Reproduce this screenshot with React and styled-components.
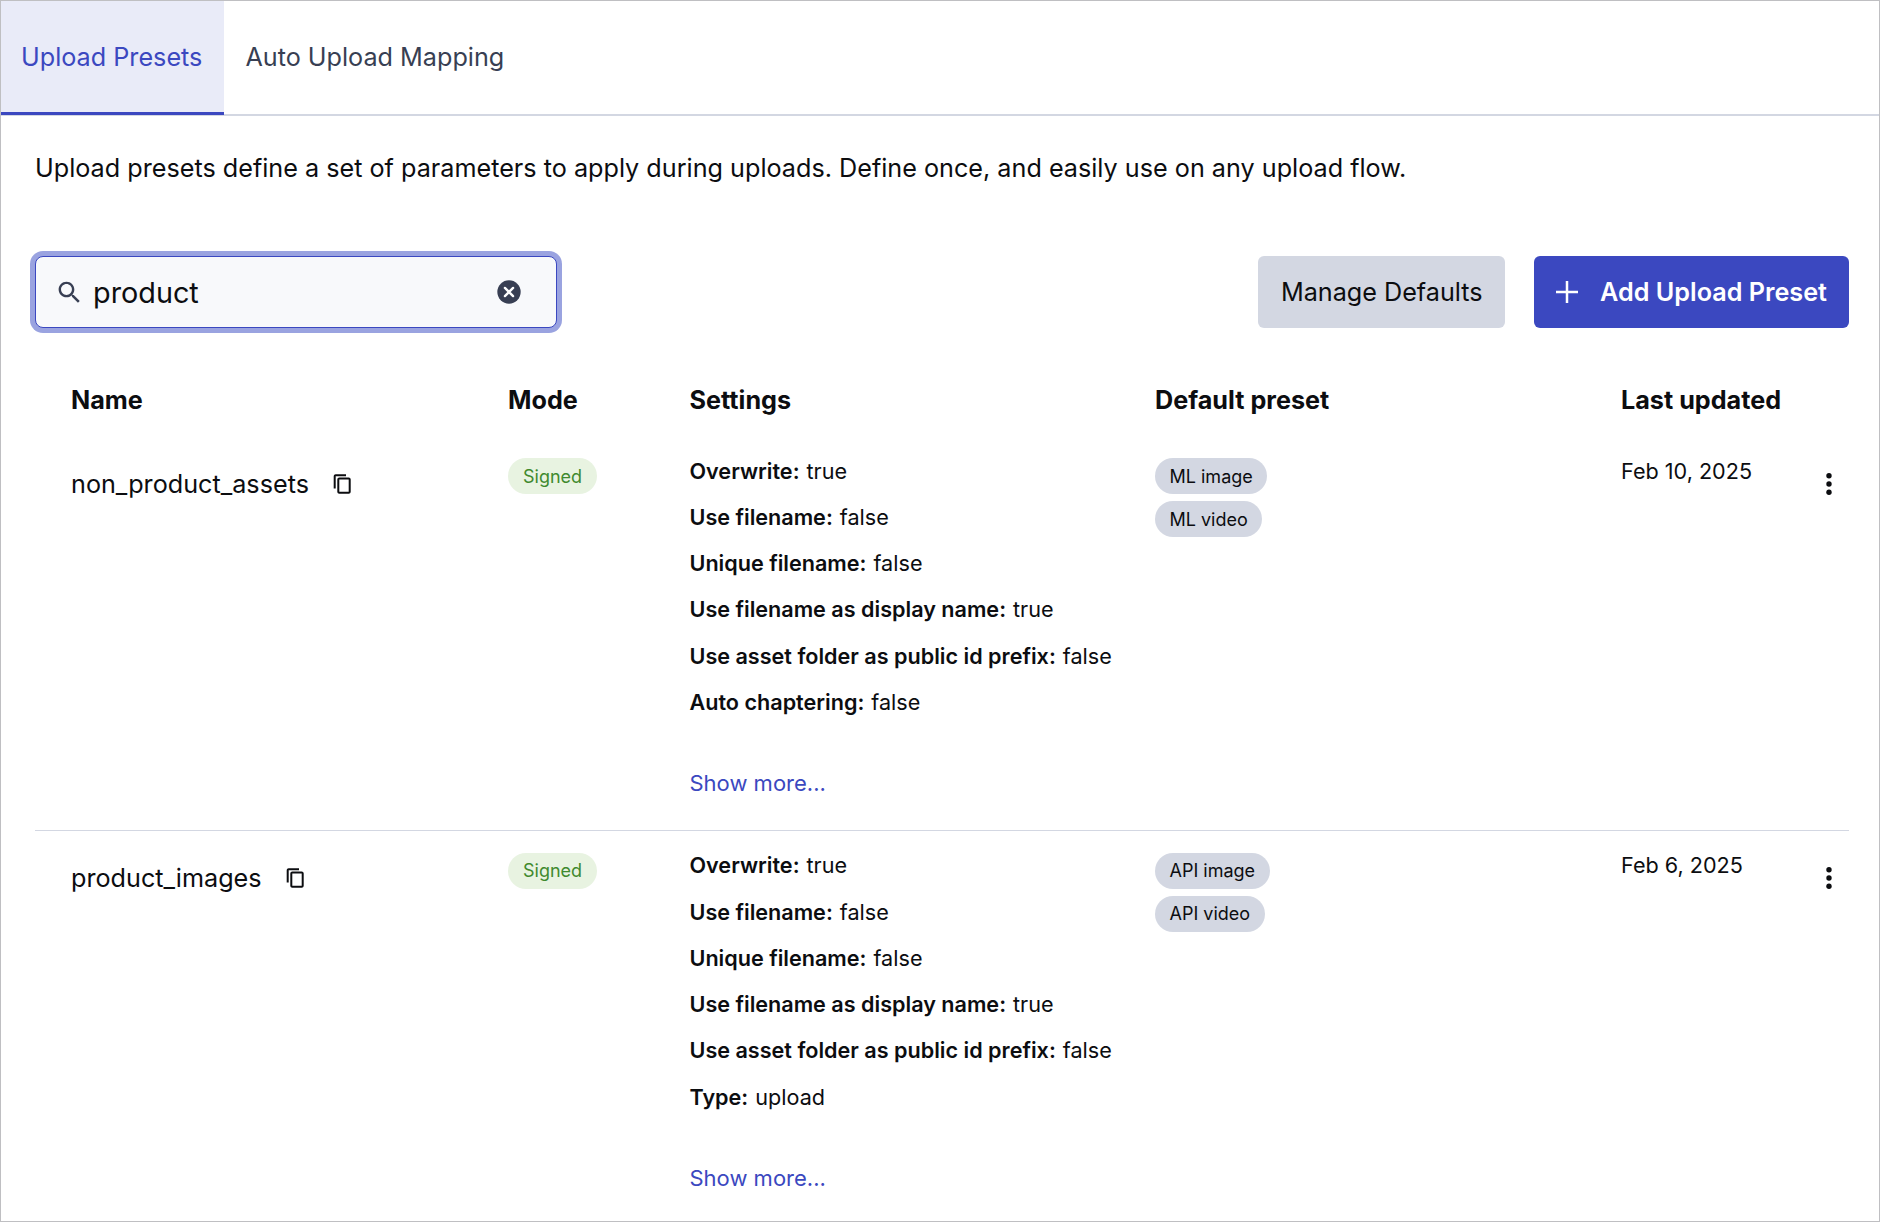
import React from 'react'
import styled, { createGlobalStyle } from 'styled-components'

const GlobalStyle = createGlobalStyle`
  html, body {
    margin: 0;
    padding: 0;
    background: #fff;
  }
  * {
    box-sizing: border-box;
  }
`

const Page = styled.div`
  width: 1880px;
  height: 1222px;
  border: 1px solid #bfbfc2;
  overflow: hidden;
  font-family: Inter, 'Liberation Sans', sans-serif;
  color: #0c0d10;
  background: #fff;
`

const TabBar = styled.div`
  display: flex;
  height: 115px;
  border-bottom: 2px solid #d3d7e2;
`

const Tab = styled.div`
  display: flex;
  align-items: center;
  height: 114px;
  padding: 0 22px 0 ${props => (props.active ? '20px' : '21px')};
  font-size: 25.2px;
  color: ${props => (props.active ? '#3b48c0' : '#383f53')};
  background: ${props => (props.active ? '#e9ebf8' : 'transparent')};
  border-bottom: 3px solid ${props => (props.active ? '#3b48c0' : 'transparent')};
`

const Intro = styled.p`
  margin: 0;
  padding: 35px 0 0 34px;
  font-size: 25.2px;
  line-height: 34px;
`

const Toolbar = styled.div`
  display: flex;
  align-items: center;
  gap: 29px;
  margin-top: 71px;
  padding: 0 30px 0 34px;
`

const SearchBox = styled.div`
  display: flex;
  align-items: center;
  width: 522px;
  height: 72px;
  margin-right: auto;
  padding: 0 33px 0 19px;
  background: #f8f9fb;
  border: 1.5px solid #3b48c0;
  border-radius: 8px;
  box-shadow: 0 0 0 5px #9aa3e0;
`

const SearchText = styled.span`
  flex: 1;
  margin-left: 9px;
  padding-top: 1px;
  font-size: 28.8px;
`

const Button = styled.div`
  display: flex;
  align-items: center;
  gap: ${props => (props.primary ? '21px' : '0')};
  height: 72px;
  padding: ${props => (props.primary ? '0 22px 0 21px' : '0 22.5px')};
  font-size: 25.2px;
  font-weight: ${props => (props.primary ? 600 : 400)};
  color: ${props => (props.primary ? '#fff' : '#0c0d10')};
  background: ${props => (props.primary ? '#3b48c0' : '#d3d7e2')};
  border-radius: 6px;
`

const Table = styled.div`
  margin: 0 30px 0 34px;
`

const columns = '437px 181.5px 465.5px 466px 1fr'

const HeaderRow = styled.div`
  display: grid;
  grid-template-columns: ${columns};
  align-items: center;
  height: 108px;
  padding: 36px 0 0 36px;
  font-size: 25.2px;
  font-weight: 700;
`

const Row = styled.div`
  display: grid;
  grid-template-columns: ${columns};
  align-items: start;
  padding: 11.5px 0 24px 36px;
  border-bottom: 1px solid #d3d7e2;
`

const NameCell = styled.div`
  display: flex;
  align-items: center;
  gap: 21px;
  padding-top: 18px;
  font-size: 25.2px;
  line-height: 36px;
`

const Pill = styled.span`
  display: inline-flex;
  align-items: center;
  height: 36px;
  padding: 0 ${props => (props.signed ? '15px' : '14.5px')};
  border-radius: 18px;
  font-size: 18px;
  color: ${props => (props.signed ? '#3f8a2e' : '#0c0d10')};
  background: ${props => (props.signed ? '#e8f3e1' : '#d3d7e2')};
`

const ModeCell = styled.div`
  padding-top: 10.5px;
`

const SettingLine = styled.div`
  font-size: 21.6px;
  line-height: 46.3px;
  white-space: nowrap;
`

const SettingName = styled.strong`
  font-weight: 600;
  margin-right: 7px;
`

const ShowMore = styled.div`
  margin-top: 34.5px;
  font-size: 22px;
  line-height: 46px;
  color: #3b48c0;
`

const TagStack = styled.div`
  display: flex;
  flex-direction: column;
  align-items: flex-start;
  gap: 7px;
  padding-top: 10.5px;
`

const DateCell = styled.div`
  display: flex;
  justify-content: space-between;
  align-items: flex-start;
  font-size: 21.6px;
  line-height: 46px;
`

const KebabWrap = styled.div`
  display: flex;
  margin: 24px 8px 0 0;
`

const SearchIcon = () => (
  <svg width="29" height="29" viewBox="0 0 24 24" fill="#383f53">
    <path d="M15.5 14h-.79l-.28-.27C15.41 12.59 16 11.11 16 9.5 16 5.91 13.09 3 9.5 3S3 5.91 3 9.5 5.91 16 9.5 16c1.61 0 3.09-.59 4.23-1.57l.27.28v.79l5 4.99L20.49 19l-4.99-5zm-6 0C7.01 14 5 11.99 5 9.5S7.01 5 9.5 5 14 7.01 14 9.5 11.99 14 9.5 14z" />
  </svg>
)

const ClearIcon = () => (
  <svg width="28" height="28" viewBox="0 0 24 24">
    <circle cx="12" cy="12" r="10" fill="#383f53" />
    <path d="M8.5 8.5l7 7M15.5 8.5l-7 7" stroke="#fff" strokeWidth="2" strokeLinecap="round" />
  </svg>
)

const PlusIcon = () => (
  <svg width="24" height="24" viewBox="0 0 24 24" stroke="#fff" strokeWidth="2.5">
    <path d="M1 12h22M12 1v22" />
  </svg>
)

const CopyIcon = () => (
  <svg width="24" height="24" viewBox="0 0 24 24" fill="#0c0d10">
    <path d="M16 2.3H5.7c-1.1 0-2 .9-2 2v12.2h2V4.3H16v-2z" />
    <path d="M18.7 5.5H9.3c-1.1 0-2 .9-2 2v12.2c0 1.1.9 2 2 2h9.4c1.1 0 2-.9 2-2V7.5c0-1.1-.9-2-2-2zm0 14.2H9.3V7.5h9.4v12.2z" />
  </svg>
)

const KebabIcon = () => (
  <svg width="24" height="24" viewBox="0 0 24 24" fill="#0c0d10">
    <circle cx="12" cy="3.8" r="2.7" />
    <circle cx="12" cy="12" r="2.7" />
    <circle cx="12" cy="20.2" r="2.7" />
  </svg>
)

const presets = [
  {
    name: 'non_product_assets',
    tags: ['ML image', 'ML video'],
    updated: 'Feb 10, 2025',
    settings: [
      ['Overwrite', 'true'],
      ['Use filename', 'false'],
      ['Unique filename', 'false'],
      ['Use filename as display name', 'true'],
      ['Use asset folder as public id prefix', 'false'],
      ['Auto chaptering', 'false']
    ]
  },
  {
    name: 'product_images',
    tags: ['API image', 'API video'],
    updated: 'Feb 6, 2025',
    settings: [
      ['Overwrite', 'true'],
      ['Use filename', 'false'],
      ['Unique filename', 'false'],
      ['Use filename as display name', 'true'],
      ['Use asset folder as public id prefix', 'false'],
      ['Type', 'upload']
    ]
  }
]

const App = () => {
  return (
    <Page>
      <GlobalStyle />
      <TabBar>
        <Tab active>Upload Presets</Tab>
        <Tab>Auto Upload Mapping</Tab>
      </TabBar>
      <Intro>Upload presets define a set of parameters to apply during uploads. Define once, and easily use on any upload flow.</Intro>
      <Toolbar>
        <SearchBox>
          <SearchIcon />
          <SearchText>product</SearchText>
          <ClearIcon />
        </SearchBox>
        <Button>Manage Defaults</Button>
        <Button primary><PlusIcon />Add Upload Preset</Button>
      </Toolbar>
      <Table>
        <HeaderRow>
          <div>Name</div>
          <div>Mode</div>
          <div>Settings</div>
          <div>Default preset</div>
          <div>Last updated</div>
        </HeaderRow>
        {presets.map(preset => (
          <Row key={preset.name}>
            <NameCell>{preset.name}<CopyIcon /></NameCell>
            <ModeCell><Pill signed>Signed</Pill></ModeCell>
            <div>
              {preset.settings.map(([label, value]) => (
                <SettingLine key={label}><SettingName>{label}:</SettingName>{value}</SettingLine>
              ))}
              <ShowMore>Show more...</ShowMore>
            </div>
            <TagStack>
              {preset.tags.map(tag => <Pill key={tag}>{tag}</Pill>)}
            </TagStack>
            <DateCell>
              {preset.updated}
              <KebabWrap><KebabIcon /></KebabWrap>
            </DateCell>
          </Row>
        ))}
      </Table>
    </Page>
  )
}

export default App
